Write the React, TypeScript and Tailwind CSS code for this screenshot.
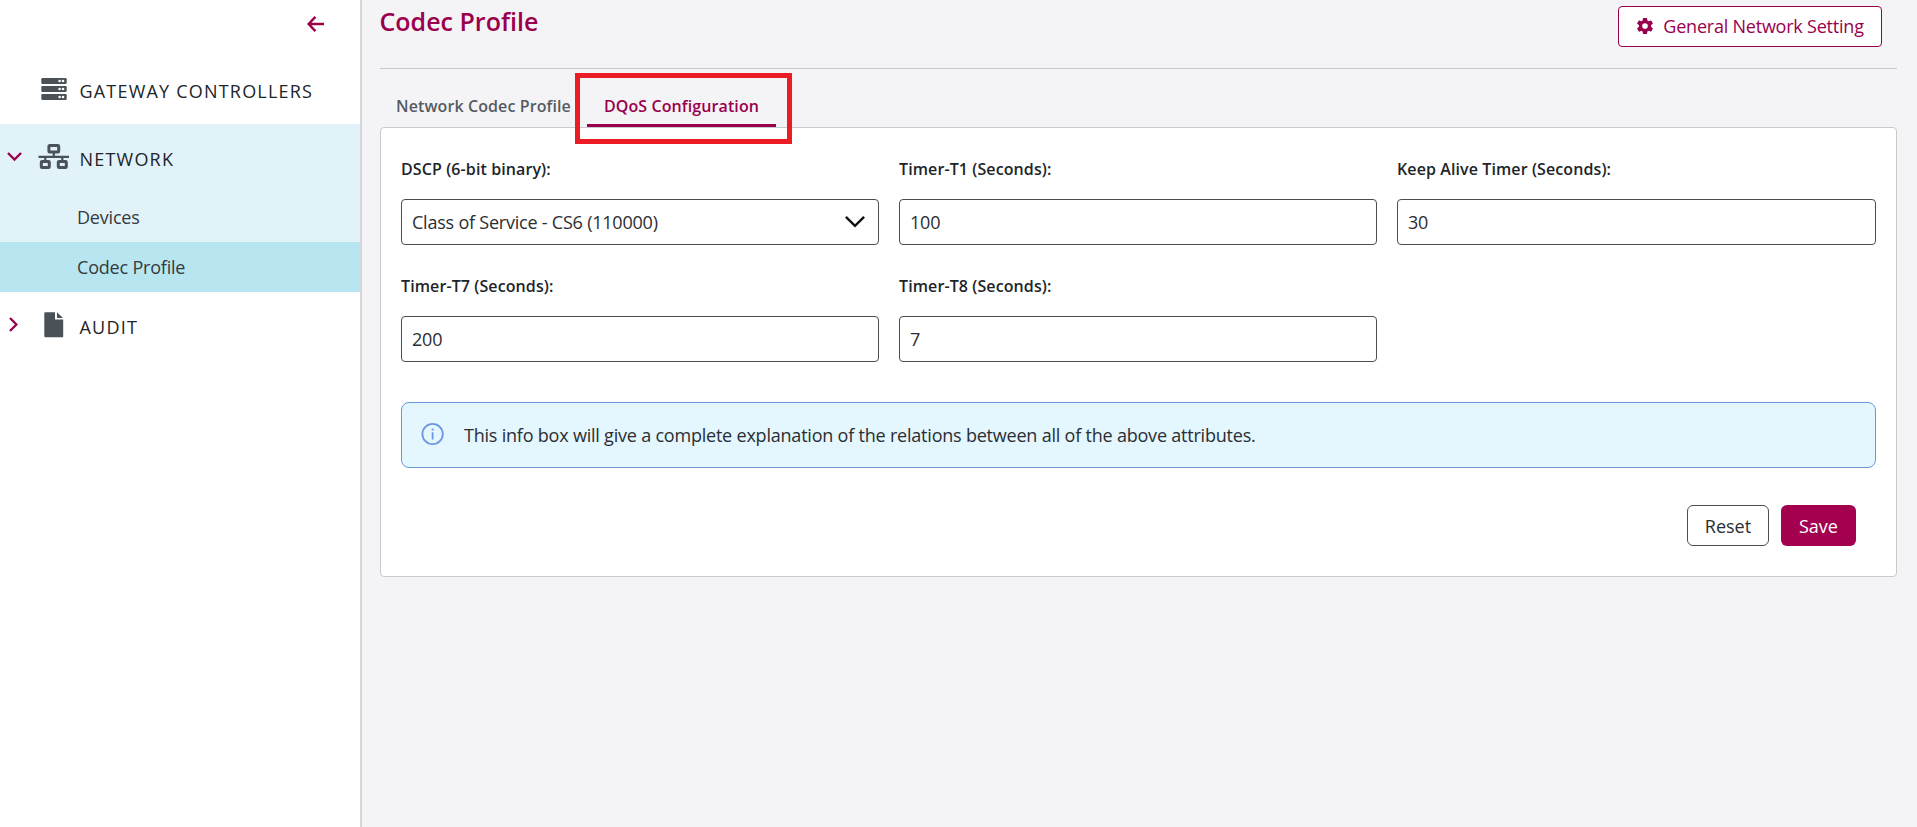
import type { ReactNode } from "react";
import { IoSettingsSharp } from "react-icons/io5";

function Server() {
  return (
    <svg width="26" height="22" viewBox="0 0 26 22" fill="#4b5257">
      {[0, 8, 16].map((y) => (
        <g key={y}>
          <rect x="0.3" y={y} width="25.4" height="6" rx="1.2" />
          <circle cx="18.6" cy={y + 3} r="1.3" fill="#fff" />
          <circle cx="22" cy={y + 3} r="1.3" fill="#fff" />
        </g>
      ))}
    </svg>
  );
}

function Network() {
  return (
    <svg width="32" height="26" viewBox="0 0 32 26" fill="none" stroke="#4b5257">
      <rect x="10.9" y="1.6" width="9.8" height="6.4" rx="0.8" strokeWidth="3" />
      <rect x="3.3" y="17.4" width="8" height="6.2" rx="0.8" strokeWidth="3" />
      <rect x="20.3" y="17.4" width="8" height="6.2" rx="0.8" strokeWidth="3" />
      <path d="M0.5 12.8H31M15.8 9V13M7.3 13V17M24.3 13V17" strokeWidth="2.2" />
    </svg>
  );
}

function FileIcon() {
  return (
    <svg width="20" height="26" viewBox="0 0 20 26" fill="#4b5257">
      <path d="M1.3 0.3H11V7.6H19.2V24.4A1 1 0 0 1 18.2 25.3H1.3A1 1 0 0 1 0.3 24.3V1.3A1 1 0 0 1 1.3 0.3Z" />
      <path d="M13 0.3L19 6.1H13Z" />
    </svg>
  );
}

function Field({ label, value, select }: { label: string; value: string; select?: boolean }) {
  return (
    <div>
      <div className="h-[29px] text-base leading-[24px] font-semibold tracking-[0.1px] text-[#212529]">{label}</div>
      <div className="mt-[13px] flex h-[46px] items-center justify-between rounded-[4px] border border-[#4b4f54] bg-white pr-[13.5px] pl-[10px] text-lg tracking-[-0.22px] text-[#2a2e32]">
        <span>{value}</span>
        {select && (
          <svg width="20" height="12" viewBox="0 0 20 12" fill="none" stroke="#111" strokeWidth="2.4">
            <path d="M0.9 0.9L10 9.8L19.1 0.9" />
          </svg>
        )}
      </div>
    </div>
  );
}

function NavHead({ icon, label, chevron }: { icon: ReactNode; label: string; chevron?: ReactNode }) {
  return (
    <>
      <span className="flex w-[38px] pl-[7px]">{chevron}</span>
      <span className="flex w-[32px] justify-center">{icon}</span>
      <span className="pt-[2px] pl-[9.5px] text-lg leading-[26px] font-medium tracking-[1.2px] text-[#212529]">{label}</span>
    </>
  );
}

export default function App() {
  return (
    <div className="flex h-[827px] w-full overflow-hidden bg-[#f4f4f7] font-['Open_Sans',sans-serif]">
      <aside className="w-[362px] shrink-0 border-r-2 border-[#d5d6da] bg-white">
        <div className="flex h-[58px] justify-end pt-[16px] pr-[36px]">
          <svg width="17" height="16" viewBox="0 0 17 16" fill="none" stroke="#99004d" strokeWidth="2.4">
            <path d="M17 8H1.8M8.4 0.9L1.6 8L8.4 15.1" />
          </svg>
        </div>
        <div className="flex h-[66px] items-start pt-[18px]">
          <NavHead icon={<span className="pt-[1.5px]"><Server /></span>} label="GATEWAY CONTROLLERS" />
        </div>
        <div className="h-[118px] bg-[#e1f2f9]">
          <div className="flex h-[68px] items-start pt-[20px]">
            <NavHead
              icon={<Network />}
              label="NETWORK"
              chevron={
                <svg className="mt-[8px]" width="15" height="10" viewBox="0 0 15 10" fill="none" stroke="#99004d" strokeWidth="2.4">
                  <path d="M1 1L7.5 7.6L14 1" />
                </svg>
              }
            />
          </div>
          <div className="flex h-[50px] items-center pl-[77px] text-lg tracking-[-0.2px] text-[#343a40]">Devices</div>
        </div>
        <div className="flex h-[50px] items-center bg-[#b8e6f0] pl-[77px] text-lg tracking-[-0.2px] text-[#343a40]">Codec Profile</div>
        <div className="flex items-start pt-[20px]">
          <NavHead
            icon={<FileIcon />}
            label="AUDIT"
            chevron={
              <svg className="mt-[5px] ml-[2px]" width="9" height="15" viewBox="0 0 9 15" fill="none" stroke="#99004d" strokeWidth="2.4">
                <path d="M1 1L7.4 7.5L1 14" />
              </svg>
            }
          />
        </div>
      </aside>
      <main className="flex-1 pr-[20px] pl-[18px]">
        <header className="flex h-[69px] items-start justify-between border-b border-[#c9cacd] pt-[6px] pr-[15px]">
          <h1 className="-mt-px -ml-[0.5px] text-[25px] leading-[32px] font-semibold text-[#99004d]">Codec Profile</h1>
          <button className="flex h-[41px] w-[264px] items-center justify-center gap-[9px] rounded-[4px] border border-[#99004d] bg-white pb-[2px] text-lg tracking-[-0.22px] text-[#99004d]">
            <IoSettingsSharp size={18} />
            General Network Setting
          </button>
        </header>
        <nav className="relative flex h-[58px] items-end pl-[16px] text-base font-semibold tracking-[0.1px]">
          <span className="w-[191px] pb-[9px] text-[#545b62]">Network Codec Profile</span>
          <span className="w-[189px] border-b-[3px] border-[#99004d] pb-[6px] text-center text-[#99004d]">DQoS Configuration</span>
          <div className="absolute top-[4px] left-[195px] z-10 h-[71px] w-[217px] border-[5px] border-[#ec1c24]" />
        </nav>
        <section className="h-[450px] rounded-[4px] border border-[#c9cacd] bg-white px-[20px] pt-[29px]">
          <div className="grid grid-cols-[478px_478px_1fr] gap-x-[20px] gap-y-[29px]">
            <Field label="DSCP (6-bit binary):" value="Class of Service - CS6 (110000)" select />
            <Field label="Timer-T1 (Seconds):" value="100" />
            <Field label="Keep Alive Timer (Seconds):" value="30" />
            <Field label="Timer-T7 (Seconds):" value="200" />
            <Field label="Timer-T8 (Seconds):" value="7" />
          </div>
          <div className="mt-[40px] flex h-[66px] items-center rounded-[8px] border border-[#6c97d6] bg-[#e4f6fe] pl-[19px] text-lg tracking-[-0.21px] text-[#2a2e32]">
            <svg className="-mt-[2px]" width="24" height="24" viewBox="0 0 24 24" fill="none" stroke="#6c97e0" strokeWidth="1.8">
              <circle cx="11.6" cy="12" r="10.2" />
              <path d="M11.6 10.2V17.4M11.6 6.4V8.4" />
            </svg>
            <span className="ml-[19px]">This info box will give a complete explanation of the relations between all of the above attributes.</span>
          </div>
          <div className="mt-[37px] flex justify-end gap-[12px] pr-[20px] text-lg">
            <button className="h-[41px] w-[82px] rounded-[6px] border border-[#4b4f54] bg-white text-[#2a2e32]">Reset</button>
            <button className="h-[41px] w-[75px] rounded-[6px] bg-[#a3004f] font-medium text-white">Save</button>
          </div>
        </section>
      </main>
    </div>
  );
}
